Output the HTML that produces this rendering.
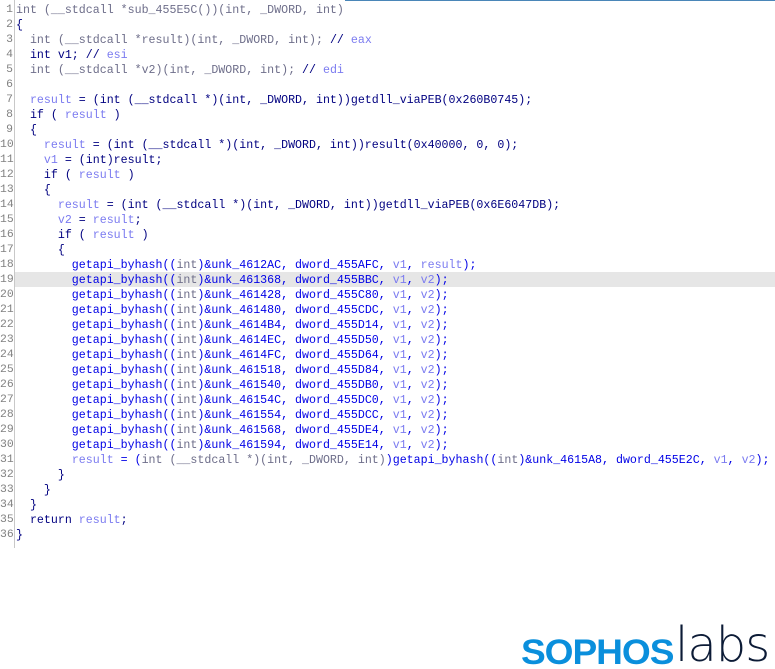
<!DOCTYPE html>
<html><head><meta charset="utf-8"><style>
html,body{margin:0;padding:0;background:#fff;width:775px;height:669px;overflow:hidden;position:relative}
.code{position:absolute;left:0;top:3px;font-family:"Liberation Mono",monospace;font-size:11.63px;line-height:15px;color:#000080;white-space:pre}
.ln{position:absolute;left:0;width:13px;text-align:right;color:#808080;font-size:11.4px}
.l{position:absolute;left:16px;height:15px}
.g{color:#6e6e8a}
.v{color:#7b7bf0}
.b{color:#0000e6}
.sep{position:absolute;left:14px;top:0;width:1px;height:548px;background:#c8c8c8}
.hl{position:absolute;left:15px;top:272px;width:760px;height:15px;background:#e6e6e6}
.top{position:absolute;left:345px;top:0;width:430px;height:1px;background:#4a86b8}
</style></head><body>
<div class="top"></div>
<div class="hl"></div>
<div class="sep"></div>
<div class="code">
<div class="ln" style="top:0">1</div><div class="l g" style="top:0">int (__stdcall *sub_455E5C())(int, _DWORD, int)</div>
<div class="ln" style="top:15px">2</div><div class="l" style="top:15px">{</div>
<div class="ln" style="top:30px">3</div><div class="l" style="top:30px"><span class="g">  int (__stdcall *result)(int, _DWORD, int); </span>// <span class="v">eax</span></div>
<div class="ln" style="top:45px">4</div><div class="l" style="top:45px">  int v1; // <span class="v">esi</span></div>
<div class="ln" style="top:60px">5</div><div class="l" style="top:60px"><span class="g">  int (__stdcall *v2)(int, _DWORD, int); </span>// <span class="v">edi</span></div>
<div class="ln" style="top:75px">6</div>
<div class="ln" style="top:90px">7</div><div class="l" style="top:90px">  <span class="v">result</span> = (int (__stdcall *)(int, _DWORD, int))getdll_viaPEB(0x260B0745);</div>
<div class="ln" style="top:105px">8</div><div class="l" style="top:105px">  if ( <span class="v">result</span> )</div>
<div class="ln" style="top:120px">9</div><div class="l" style="top:120px">  {</div>
<div class="ln" style="top:135px">10</div><div class="l" style="top:135px">    <span class="v">result</span> = (int (__stdcall *)(int, _DWORD, int))result(0x40000, 0, 0);</div>
<div class="ln" style="top:150px">11</div><div class="l" style="top:150px">    <span class="v">v1</span> = (int)result;</div>
<div class="ln" style="top:165px">12</div><div class="l" style="top:165px">    if ( <span class="v">result</span> )</div>
<div class="ln" style="top:180px">13</div><div class="l" style="top:180px">    {</div>
<div class="ln" style="top:195px">14</div><div class="l" style="top:195px">      <span class="v">result</span> = (int (__stdcall *)(int, _DWORD, int))getdll_viaPEB(0x6E6047DB);</div>
<div class="ln" style="top:210px">15</div><div class="l" style="top:210px">      <span class="v">v2</span> = <span class="v">result</span>;</div>
<div class="ln" style="top:225px">16</div><div class="l" style="top:225px">      if ( <span class="v">result</span> )</div>
<div class="ln" style="top:240px">17</div><div class="l" style="top:240px">      {</div>
<div class="ln" style="top:255px">18</div><div class="l b" style="top:255px">        getapi_byhash((<span class="g">int</span>)&amp;unk_4612AC, dword_455AFC, <span class="v">v1</span>, <span class="v">result</span>);</div>
<div class="ln" style="top:270px">19</div><div class="l b" style="top:270px">        getapi_byhash((<span class="g">int</span>)&amp;unk_461368, dword_455BBC, <span class="v">v1</span>, <span class="v">v2</span>);</div>
<div class="ln" style="top:285px">20</div><div class="l b" style="top:285px">        getapi_byhash((<span class="g">int</span>)&amp;unk_461428, dword_455C80, <span class="v">v1</span>, <span class="v">v2</span>);</div>
<div class="ln" style="top:300px">21</div><div class="l b" style="top:300px">        getapi_byhash((<span class="g">int</span>)&amp;unk_461480, dword_455CDC, <span class="v">v1</span>, <span class="v">v2</span>);</div>
<div class="ln" style="top:315px">22</div><div class="l b" style="top:315px">        getapi_byhash((<span class="g">int</span>)&amp;unk_4614B4, dword_455D14, <span class="v">v1</span>, <span class="v">v2</span>);</div>
<div class="ln" style="top:330px">23</div><div class="l b" style="top:330px">        getapi_byhash((<span class="g">int</span>)&amp;unk_4614EC, dword_455D50, <span class="v">v1</span>, <span class="v">v2</span>);</div>
<div class="ln" style="top:345px">24</div><div class="l b" style="top:345px">        getapi_byhash((<span class="g">int</span>)&amp;unk_4614FC, dword_455D64, <span class="v">v1</span>, <span class="v">v2</span>);</div>
<div class="ln" style="top:360px">25</div><div class="l b" style="top:360px">        getapi_byhash((<span class="g">int</span>)&amp;unk_461518, dword_455D84, <span class="v">v1</span>, <span class="v">v2</span>);</div>
<div class="ln" style="top:375px">26</div><div class="l b" style="top:375px">        getapi_byhash((<span class="g">int</span>)&amp;unk_461540, dword_455DB0, <span class="v">v1</span>, <span class="v">v2</span>);</div>
<div class="ln" style="top:390px">27</div><div class="l b" style="top:390px">        getapi_byhash((<span class="g">int</span>)&amp;unk_46154C, dword_455DC0, <span class="v">v1</span>, <span class="v">v2</span>);</div>
<div class="ln" style="top:405px">28</div><div class="l b" style="top:405px">        getapi_byhash((<span class="g">int</span>)&amp;unk_461554, dword_455DCC, <span class="v">v1</span>, <span class="v">v2</span>);</div>
<div class="ln" style="top:420px">29</div><div class="l b" style="top:420px">        getapi_byhash((<span class="g">int</span>)&amp;unk_461568, dword_455DE4, <span class="v">v1</span>, <span class="v">v2</span>);</div>
<div class="ln" style="top:435px">30</div><div class="l b" style="top:435px">        getapi_byhash((<span class="g">int</span>)&amp;unk_461594, dword_455E14, <span class="v">v1</span>, <span class="v">v2</span>);</div>
<div class="ln" style="top:450px">31</div><div class="l b" style="top:450px">        <span class="v">result</span> = (<span class="g">int (__stdcall *)(int, _DWORD, int)</span>)getapi_byhash((<span class="g">int</span>)&amp;unk_4615A8, dword_455E2C, <span class="v">v1</span>, <span class="v">v2</span>);</div>
<div class="ln" style="top:465px">32</div><div class="l" style="top:465px">      }</div>
<div class="ln" style="top:480px">33</div><div class="l" style="top:480px">    }</div>
<div class="ln" style="top:495px">34</div><div class="l" style="top:495px">  }</div>
<div class="ln" style="top:510px">35</div><div class="l" style="top:510px">  return <span class="v">result</span>;</div>
<div class="ln" style="top:525px">36</div><div class="l" style="top:525px">}</div>
</div>
<div style="position:absolute;left:521px;top:633px;font-family:'Liberation Sans',sans-serif;font-weight:bold;font-size:35px;color:#0a8fdc;letter-spacing:-1px;transform:scaleX(1.06);transform-origin:left;line-height:40px">SOPHOS</div>
<div style="position:absolute;left:675px;top:618px;font-family:'DejaVu Sans',sans-serif;font-weight:200;font-size:48px;color:#0c1b36;line-height:54px;letter-spacing:-1px">labs</div>
</body></html>
